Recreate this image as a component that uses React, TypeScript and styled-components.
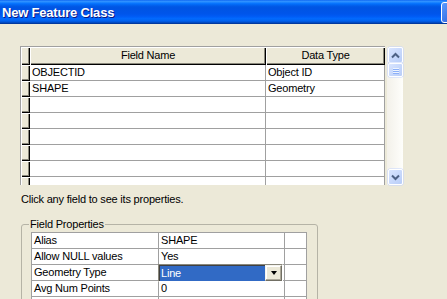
import React from 'react';
import styled, { createGlobalStyle } from 'styled-components';

const Global = createGlobalStyle`
  html, body { margin: 0; padding: 0; background: #ECE9D8; }
  body { font-family: "Liberation Sans", Arial, sans-serif; font-size: 11px; color: #000; }
`;

const Window = styled.div`
  width: 447px;
  height: 299px;
  overflow: hidden;
  background: #ECE9D8;
  display: flex;
  flex-direction: column;
`;

const TitleBar = styled.div`
  height: 24px;
  flex: none;
  display: flex;
  align-items: center;
  justify-content: space-between;
  padding-left: 2px;
  background: linear-gradient(
    to bottom,
    #0058ee 0%, #3593ff 4%, #288eff 8%, #127dff 12%, #036ffc 16%,
    #0262ee 22%, #0057e5 28%, #0054e3 34%, #0055eb 58%, #005bf5 68%,
    #026afe 78%, #0062ef 86%, #0052d6 92%, #0040ab 96%, #003092 100%
  );
`;

const Title = styled.div`
  color: #fff;
  font-weight: bold;
  font-size: 13px;
  letter-spacing: -0.2px;
  text-shadow: 1px 1px 0 #0a1883;
  padding-top: 1px;
`;

const TitleButton = styled.div`
  width: 21px;
  height: 21px;
  margin-right: -15px;
  box-sizing: border-box;
  border: 1px solid #fff;
  border-radius: 3px;
  background: linear-gradient(135deg, #5b9bff, #2457d6);
`;

const Body = styled.div`
  display: flex;
  flex-direction: column;
  padding: 22px 0 0 20px;
`;

const GridRow = styled.div`
  display: flex;
  align-items: flex-start;
  gap: 2px;
`;

const GridFrame = styled.div`
  width: 365px;
  height: 139px;
  box-sizing: border-box;
  border-left: 1px solid #a0a0a0;
  border-top: 1px solid #a0a0a0;
  overflow: hidden;
  display: grid;
  grid-template-columns: 9px 236px 119px;
  grid-template-rows: 18px;
  grid-auto-rows: 16px;
  background: #fff;
`;

const HeaderCell = styled.div`
  background: #ece9d8;
  box-shadow: inset 1px 1px 0 #fff, inset -1px -1px 0 #000, inset -2px -2px 0 #8a887c;
  text-align: center;
  line-height: 17px;
  white-space: nowrap;
  overflow: hidden;
  letter-spacing: -0.2px;
`;

const DataCell = styled.div`
  background: #fff;
  box-sizing: border-box;
  border-right: 1px solid #a0a0a0;
  border-bottom: 1px solid #a0a0a0;
  padding-left: 2px;
  line-height: 15px;
  white-space: nowrap;
  overflow: hidden;
  letter-spacing: -0.2px;
`;

const ScrollTrack = styled.div`
  width: 16px;
  height: 138px;
  margin-top: 1px;
  display: flex;
  flex-direction: column;
  background: linear-gradient(to right, #f3f1ea, #fefefb);
`;

const ScrollButton = styled.div`
  width: 15px;
  height: 16px;
  margin-left: 1px;
  box-sizing: border-box;
  border: 1px solid #fff;
  border-radius: 2px;
  background: linear-gradient(135deg, #d9e5ff, #b8cdf8);
  box-shadow: 0 0 0 0.5px #c3d3fd;
  display: flex;
  align-items: center;
  justify-content: center;
`;

const Thumb = styled(ScrollButton)`
  height: 14px;
  flex-direction: column;
  gap: 1px;
`;

const Grip = styled.div`
  width: 6px;
  height: 1px;
  background: #eef4fe;
  box-shadow: 0 1px 0 #8cb0f8;
`;

const Spacer = styled.div`
  flex: 1;
`;

const Hint = styled.div`
  margin-top: 8px;
  padding-left: 1px;
  line-height: 13px;
  letter-spacing: -0.2px;
`;

const Group = styled.fieldset`
  margin: 12px 0 0 1px;
  width: 297px;
  height: 120px;
  box-sizing: border-box;
  border: 1px solid #b5b3a6;
  border-radius: 3px;
  padding: 1px 0 0 7px;
`;

const Legend = styled.legend`
  padding: 0 1px;
  line-height: 13px;
  letter-spacing: -0.2px;
`;

const PropGrid = styled.div`
  margin-left: 2px;
  width: 276px;
  box-sizing: border-box;
  border-left: 1px solid #a0a0a0;
  border-top: 1px solid #a0a0a0;
  display: grid;
  grid-template-columns: 127px 126px 22px;
  grid-auto-rows: 16px;
  background: #fff;
`;

const PropCell = styled(DataCell)`
  position: relative;
  overflow: visible;
`;

const Combo = styled.div`
  position: absolute;
  left: -1px;
  top: -1px;
  width: 125px;
  height: 18px;
  box-sizing: border-box;
  display: flex;
  border-top: 1px solid #8a887c;
  border-left: 1px solid #8a887c;
  border-right: 1px solid #fff;
  border-bottom: 1px solid #fff;
  box-shadow: inset 1px 1px 0 #404040;
  background: #fff;
  padding: 1px 0 0 1px;
`;

const ComboText = styled.div`
  flex: 1;
  background: #316ac5;
  color: #fff;
  line-height: 15px;
  padding-left: 1px;
  letter-spacing: -0.2px;
`;

const ComboButton = styled.div`
  width: 17px;
  height: 16px;
  margin-top: -1px;
  box-sizing: border-box;
  background: #ece9d8;
  border-top: 1px solid #f5f4ee;
  border-left: 1px solid #f5f4ee;
  border-right: 1px solid #716f64;
  border-bottom: 1px solid #716f64;
  box-shadow: inset -1px -1px 0 #aca899, inset 1px 1px 0 #fff;
  display: flex;
  align-items: center;
  justify-content: center;
`;

const Arrow = styled.div`
  width: 0;
  height: 0;
  border-left: 3.5px solid transparent;
  border-right: 3.5px solid transparent;
  border-top: 4px solid #000;
`;

const Chevron: React.FC<{ up?: boolean }> = ({ up }) => (
  <svg width="9" height="7" viewBox="0 0 9 7">
    <path
      d={up ? 'M1 5.5 L4.5 2 L8 5.5' : 'M1 1.5 L4.5 5 L8 1.5'}
      fill="none"
      stroke="#4d6185"
      strokeWidth="2"
    />
  </svg>
);

const rows: [string, string][] = [
  ['OBJECTID', 'Object ID'],
  ['SHAPE', 'Geometry'],
  ['', ''],
  ['', ''],
  ['', ''],
  ['', ''],
  ['', ''],
  ['', ''],
];

const props: [string, string | null][] = [
  ['Alias', 'SHAPE'],
  ['Allow NULL values', 'Yes'],
  ['Geometry Type', null],
  ['Avg Num Points', '0'],
  ['', ''],
];

export default function App() {
  return (
    <Window>
      <Global />
      <TitleBar>
        <Title>New Feature Class</Title>
        <TitleButton />
      </TitleBar>
      <Body>
        <GridRow>
          <GridFrame>
            <HeaderCell />
            <HeaderCell>Field Name</HeaderCell>
            <HeaderCell>Data Type</HeaderCell>
            {rows.map(([a, b], i) => (
              <React.Fragment key={i}>
                <HeaderCell />
                <DataCell>{a}</DataCell>
                <DataCell>{b}</DataCell>
              </React.Fragment>
            ))}
          </GridFrame>
          <ScrollTrack>
            <ScrollButton>
              <Chevron up />
            </ScrollButton>
            <Thumb>
              <Grip />
              <Grip />
              <Grip />
            </Thumb>
            <Spacer />
            <ScrollButton>
              <Chevron />
            </ScrollButton>
          </ScrollTrack>
        </GridRow>
        <Hint>Click any field to see its properties.</Hint>
        <Group>
          <Legend>Field Properties</Legend>
          <PropGrid>
            {props.map(([k, v], i) => (
              <React.Fragment key={i}>
                <DataCell>{k}</DataCell>
                {v === null ? (
                  <PropCell>
                    <Combo>
                      <ComboText>Line</ComboText>
                      <ComboButton>
                        <Arrow />
                      </ComboButton>
                    </Combo>
                  </PropCell>
                ) : (
                  <DataCell>{v}</DataCell>
                )}
                <DataCell />
              </React.Fragment>
            ))}
          </PropGrid>
        </Group>
      </Body>
    </Window>
  );
}
